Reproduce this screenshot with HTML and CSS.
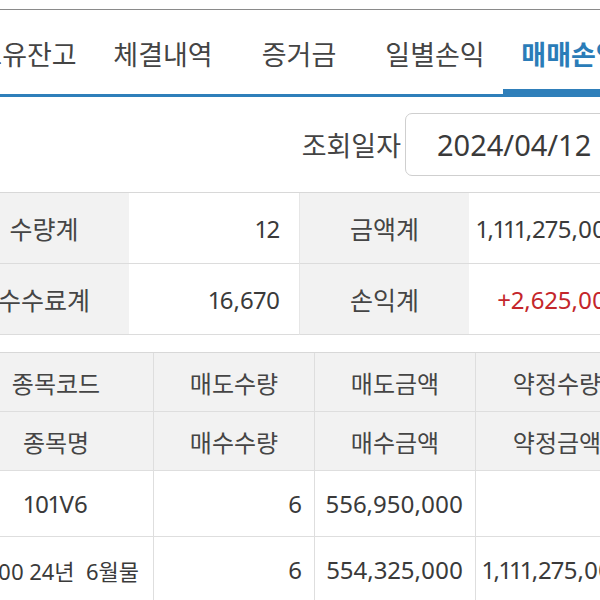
FILE: index.html
```html
<!DOCTYPE html>
<html lang="ko">
<head>
  <meta charset="UTF-8" />
  <meta name="viewport" content="width=device-width, initial-scale=1.0"/>
  <title>매매손익</title>
  <link rel="stylesheet" href="styles.css">
</head>
<body>

  <div class="page">
    <div class="topbar"></div>

    <nav class="tabs">
      <a class="tab">보유잔고</a>
      <a class="tab">체결내역</a>
      <a class="tab">증거금</a>
      <a class="tab">일별손익</a>
      <a class="tab active">매매손익</a>
    </nav>

    <div class="search">
      <label class="search-label" for="date">조회일자</label>
      <div class="date-box" id="date">2024/04/12</div>
    </div>

    <div class="summary">
      <div class="sum-label">수량계</div>
      <div class="sum-value">12</div>
      <div class="sum-label split">금액계</div>
      <div class="sum-value">1,111,275,000</div>
      <div class="sum-label">수수료계</div>
      <div class="sum-value">16,670</div>
      <div class="sum-label split">손익계</div>
      <div class="sum-value plus">+2,625,000</div>
    </div>

    <div class="detail">
      <div class="head">종목코드</div>
      <div class="head">매도수량</div>
      <div class="head">매도금액</div>
      <div class="head">약정수량</div>
      <div class="head">종목명</div>
      <div class="head">매수수량</div>
      <div class="head">매수금액</div>
      <div class="head">약정금액</div>

      <div class="cell center">101V6</div>
      <div class="cell num">6</div>
      <div class="cell num">556,950,000</div>
      <div class="cell num"></div>
      <div class="cell name">코스피200 24년  6월물</div>
      <div class="cell num">6</div>
      <div class="cell num">554,325,000</div>
      <div class="cell num">1,111,275,000</div>
    </div>
  </div>

</body>
</html>
```

FILE: styles.css
```css
body {
  margin: 0;
  background-color: white;
  font-family: "Noto Sans", "Noto Sans CJK KR", sans-serif;
  color: #404040;
  overflow: hidden;
}

.page {
  width: 680px;
  margin-left: -41px;
}

.topbar {
  height: 9px;
  border-bottom: 1px solid #8a8a8a;
}

/* tab strip */
.tabs {
  display: flex;
  height: 84px;
  border-bottom: 3px solid #2f7fba;
}

.tab {
  flex: none;
  width: 136px;
  display: flex;
  align-items: center;
  justify-content: center;
  padding-top: 3px;
  box-sizing: border-box;
  font-size: 27px;
  color: #444;
  white-space: nowrap;
}

.tab.active {
  color: #2a7cb8;
  font-weight: bold;
  box-shadow: inset 0 -5px 0 #2f7fba;
}

/* date search */
.search {
  display: flex;
  justify-content: flex-end;
  align-items: center;
  margin-top: 16px;
  padding-right: 10px;
}

.search-label {
  font-size: 27px;
  color: #444;
  margin-right: 4px;
}

.date-box {
  width: 224px;
  height: 63px;
  box-sizing: border-box;
  border: 1px solid #cfcfcf;
  border-radius: 7px;
  display: flex;
  align-items: center;
  padding-left: 31px;
  font-size: 29px;
  color: #3a3a3a;
}

/* totals */
.summary {
  display: grid;
  grid-template-columns: repeat(4, 170px);
  margin-top: 16px;
  border-top: 1px solid #d8d8d8;
}

.sum-label,
.sum-value {
  height: 71px;
  box-sizing: border-box;
  border-bottom: 1px solid #dcdcdc;
  display: flex;
  align-items: center;
  font-size: 24px;
  white-space: nowrap;
}

.sum-label {
  justify-content: center;
  background-color: #f2f2f2;
  color: #454545;
  font-size: 25px;
}

.sum-label.split {
  border-left: 1px solid #e6e6e6;
}

.sum-value {
  justify-content: flex-end;
  padding-right: 19px;
  color: #3a3a3a;
  font-variant-numeric: proportional-nums;
}

.sum-value.plus {
  color: #c4262b;
}

/* detail grid */
.detail {
  display: grid;
  grid-template-columns: 195px 161px 161px 163px;
  margin-top: 17px;
  border-top: 1px solid #d8d8d8;
}

.head,
.cell {
  box-sizing: border-box;
  border-right: 1px solid #dedede;
  border-bottom: 1px solid #dedede;
  display: flex;
  align-items: center;
  font-size: 24px;
  white-space: pre;
}

.head {
  height: 59px;
  justify-content: center;
  background-color: #f2f2f2;
  color: #454545;
}

.cell {
  height: 66px;
  color: #3a3a3a;
  font-variant-numeric: proportional-nums;
}

.cell.center {
  justify-content: center;
}

.cell.num,
.cell.name {
  justify-content: flex-end;
  padding-right: 12px;
}

.cell.name {
  padding-right: 14px;
  font-size: 22px;
}
```
